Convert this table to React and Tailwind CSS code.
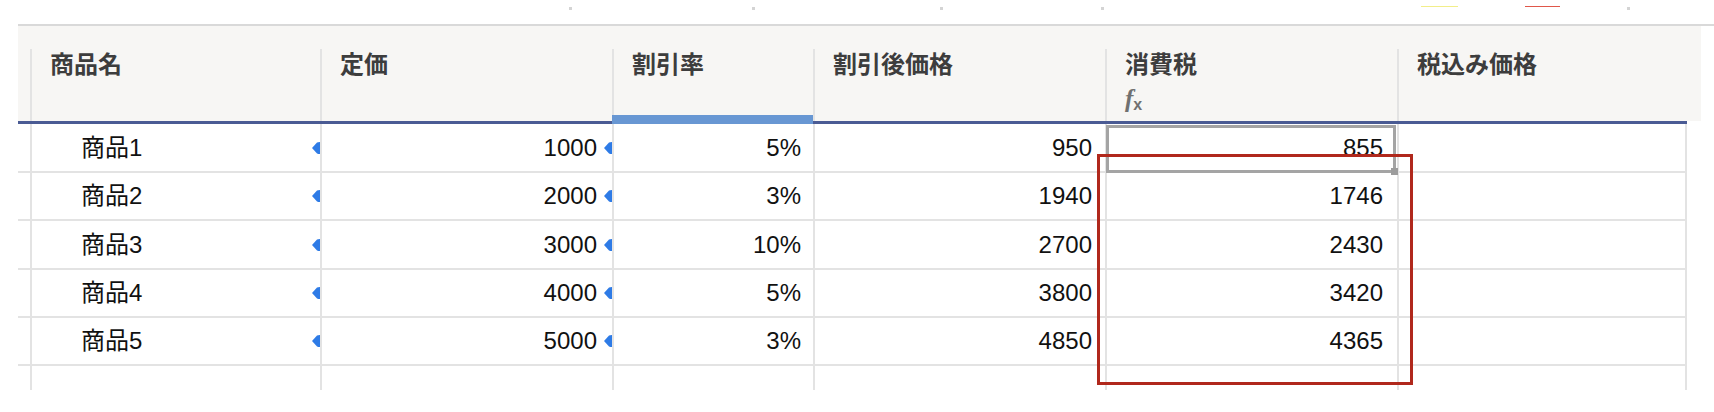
import React from "react";

const cols = [
  { name: "商品名", w: "w-[290px]" },
  { name: "定価", w: "w-[292px]" },
  { name: "割引率", w: "w-[201px]" },
  { name: "割引後価格", w: "w-[292px]" },
  { name: "消費税", w: "w-[292px]", fx: true },
  { name: "税込み価格", w: "w-[304px]" },
];

const rows = [
  { h: "h-[49px]", v: ["商品1", "1000", "5%", "950", "855"] },
  { h: "h-[48px]", v: ["商品2", "2000", "3%", "1940", "1746"] },
  { h: "h-[49px]", v: ["商品3", "3000", "10%", "2700", "2430"] },
  { h: "h-[48px]", v: ["商品4", "4000", "5%", "3800", "3420"] },
  { h: "h-[48px]", v: ["商品5", "5000", "3%", "4850", "4365"] },
];

function Marker() {
  return (
    <svg
      className="absolute right-0 top-1/2 -translate-y-1/2"
      width="8"
      height="12"
      viewBox="0 0 8 12"
    >
      <path d="M0 6 L5 0.5 Q6 0 8 0 L8 12 Q6 12 5 11.5 Z" fill="#2e7be6" />
    </svg>
  );
}

function Row({ row, first }) {
  const r = row.v;
  return (
    <div className={`flex ${row.h} w-[1669px] border-b-2 border-[#e3e3e3]`}>
      <div className="w-[12px] shrink-0" />
      <div className="relative w-[290px] shrink-0 border-l-2 border-[#e3e3e3] flex items-center pl-[49px]">
        {r[0]}
        <Marker />
      </div>
      <div className="relative w-[292px] shrink-0 border-l-2 border-[#e3e3e3] flex items-center justify-end pr-[15px]">
        {r[1]}
        <Marker />
      </div>
      <div className="w-[201px] shrink-0 border-l-2 border-[#e3e3e3] flex items-center justify-end pr-[12px]">
        {r[2]}
      </div>
      <div className="w-[292px] shrink-0 border-l-2 border-[#e3e3e3] flex items-center justify-end pr-[13px]">
        {r[3]}
      </div>
      <div className="relative w-[292px] shrink-0 border-l-2 border-[#e3e3e3] flex items-center justify-end pr-[14px]">
        {r[4]}
        {first && (
          <div className="absolute -left-[1px] top-[1px] right-[1px] -bottom-[2px] border-[3px] border-[#a4a4a4]">
            <span className="absolute -right-[5px] -bottom-[5px] w-[7px] h-[7px] bg-[#9c9c9c]" />
          </div>
        )}
      </div>
      <div className="w-[290px] shrink-0 border-x-2 border-[#e3e3e3]" />
    </div>
  );
}

export default function App() {
  return (
    <div className="w-[1714px] h-[412px] bg-white overflow-hidden text-[#111] font-['Liberation_Sans','Noto_Sans_CJK_JP',sans-serif]">
      {/* toolbar remnants */}
      <div className="relative h-[24px]">
        <span className="absolute left-[569px] top-[7px] w-[3px] h-[3px] bg-[#d4d4d4]" />
        <span className="absolute left-[752px] top-[7px] w-[3px] h-[3px] bg-[#d4d4d4]" />
        <span className="absolute left-[940px] top-[7px] w-[3px] h-[3px] bg-[#d4d4d4]" />
        <span className="absolute left-[1101px] top-[7px] w-[3px] h-[3px] bg-[#d4d4d4]" />
        <span className="absolute left-[1421px] top-[6px] w-[37px] h-[1px] bg-[#f2ee8a]" />
        <span className="absolute left-[1525px] top-[6px] w-[35px] h-[1px] bg-[#e0574a]" />
        <span className="absolute left-[1627px] top-[7px] w-[3px] h-[3px] bg-[#d4d4d4]" />
      </div>

      <div className="relative ml-[18px]">
        <div className="h-[2px] w-[1696px] bg-[#d9d9d9]" />

        {/* header */}
        <div className="flex w-[1683px] h-[95px] bg-[#f7f6f4] pt-[23px]">
          <div className="w-[12px] shrink-0" />
          {cols.map((c) => (
            <div
              key={c.name}
              className={`${c.w} shrink-0 border-l-2 border-[#e3e3e3] pl-[18px] text-[24px] leading-[32px] font-bold text-[#3d3d3d]`}
            >
              <div>{c.name}</div>
              {c.fx && (
                <div className="mt-[5px] flex items-end text-[#707070] leading-none">
                  <span className="italic font-['Liberation_Serif',serif] text-[25px]">f</span>
                  <span className="text-[16px] font-extrabold relative top-[2px]">x</span>
                </div>
              )}
            </div>
          ))}
        </div>

        {/* header bottom rule */}
        <div className="flex items-end h-[9px] -mt-[6px]">
          <div className="w-[594px] h-[3px] bg-[#4a5b94]" />
          <div className="w-[201px] h-[9px] bg-[#6897d3]" />
          <div className="w-[874px] h-[3px] bg-[#4a5b94]" />
        </div>

        {/* body */}
        <div className="text-[24px]">
          {rows.map((row, i) => (
            <Row key={row.v[0]} row={row} first={i === 0} />
          ))}
          <div className="flex h-[24px] w-[1669px]">
            <div className="w-[12px] shrink-0" />
            <div className="w-[290px] shrink-0 border-l-2 border-[#e3e3e3]" />
            <div className="w-[292px] shrink-0 border-l-2 border-[#e3e3e3]" />
            <div className="w-[201px] shrink-0 border-l-2 border-[#e3e3e3]" />
            <div className="w-[292px] shrink-0 border-l-2 border-[#e3e3e3]" />
            <div className="w-[292px] shrink-0 border-l-2 border-[#e3e3e3]" />
            <div className="w-[290px] shrink-0 border-x-2 border-[#e3e3e3]" />
          </div>
        </div>

        {/* highlight frame */}
        <div className="absolute left-[1079px] top-[130px] w-[316px] h-[231px] border-[3px] border-[#b0281c]" />
      </div>
    </div>
  );
}
